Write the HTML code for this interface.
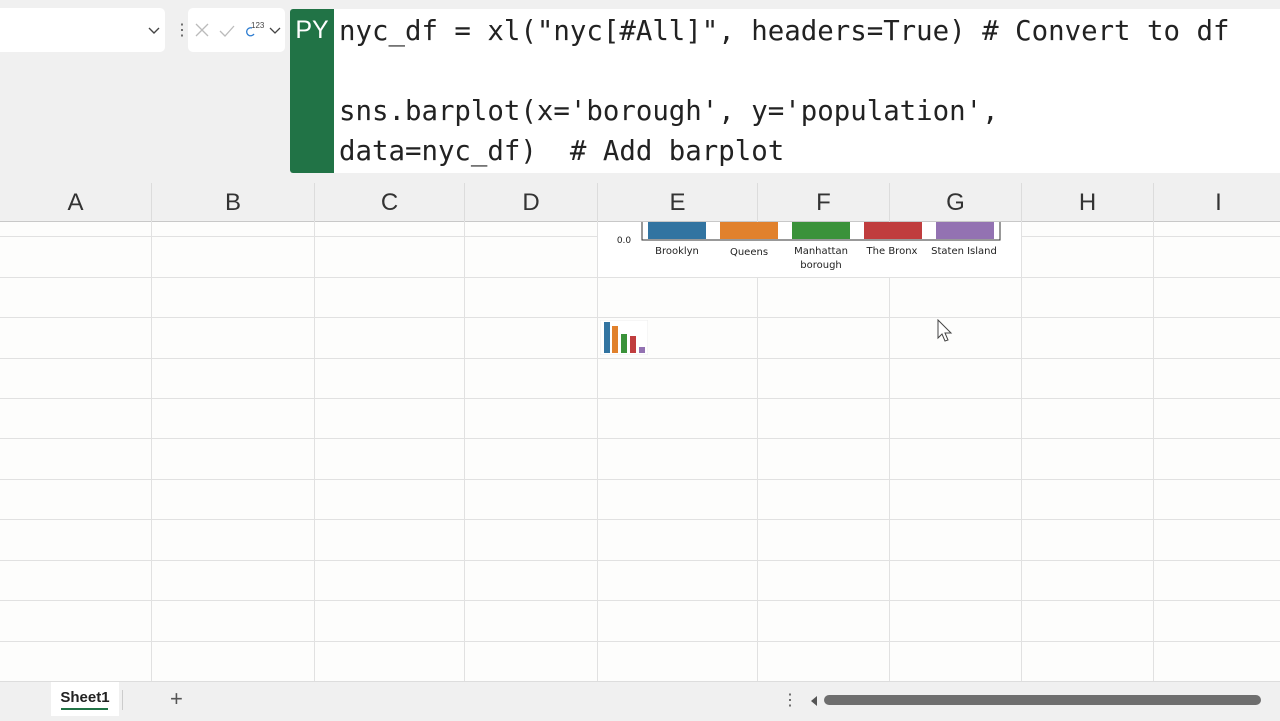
<!DOCTYPE html><html><head><style>
body{margin:0;width:1280px;height:720px;overflow:hidden;background:#f0f0f0;font-family:"Liberation Sans",sans-serif;position:relative}
.a{position:absolute}
.code{font-family:"DejaVu Sans Mono","Liberation Mono",monospace;font-size:27.4px;color:#222;line-height:40px;white-space:pre}
.hdr{top:183px;height:38px;background:#f0f0f0;border-bottom:1px solid #c8c8c8}
.col{position:absolute;top:183px;height:38px;line-height:40px;text-align:center;font-size:24px;color:#333;border-right:1px solid #dcdcdc;box-sizing:border-box}
.vl{position:absolute;top:221px;width:1px;height:460px;background:#e1e1e1}
.hl{position:absolute;left:0;width:1280px;height:1px;background:#e1e1e1}
</style></head><body>
<div class="a" style="left:0;top:8px;width:165px;height:44px;background:#fff;border-radius:0 5px 5px 0"></div>
<svg class="a" style="left:147px;top:26px" width="14" height="10"><path d="M2 2l5 5 5-5" stroke="#444" stroke-width="1.4" fill="none"/></svg>
<div class="a" style="left:174px;top:20px;font-size:16px;color:#555">&#8942;</div>
<div class="a" style="left:188px;top:8px;width:97px;height:44px;background:#fff;border-radius:5px"></div>
<svg class="a" style="left:194px;top:22px" width="90" height="20"><path d="M2 2l12 12M14 2L2 14" stroke="#bbb" stroke-width="1.3"/><path d="M26 9l5 5 9-10" stroke="#bbb" stroke-width="1.3" fill="none"/><path d="M58 6a4 4 0 1 0 2 6" stroke="#2b7bd0" stroke-width="1.3" fill="none"/><text x="57" y="6" font-size="8" fill="#444" font-family="Liberation Sans">123</text><path d="M76 6l5 5 5-5" stroke="#444" stroke-width="1.3" fill="none"/></svg>
<div class="a" style="left:290px;top:9px;width:44px;height:164px;background:#217346;border-radius:3px 0 0 3px;color:#fff;font-size:25px;text-align:center;line-height:42px">PY</div>
<div class="a" style="left:334px;top:9px;width:946px;height:164px;background:#fff"></div>
<div class="a code" style="left:339px;top:12px">nyc_df = xl("nyc[#All]", headers=True) # Convert to df

sns.barplot(x='borough', y='population',
data=nyc_df)  # Add barplot</div>
<div class="a" style="left:0;top:221px;width:1280px;height:460px;background:#fdfdfc"></div>
<div class="a hdr" style="left:0;width:1280px"></div>
<div class="col" style="left:0;width:152px">A</div>
<div class="col" style="left:152px;width:163px">B</div>
<div class="col" style="left:315px;width:150px">C</div>
<div class="col" style="left:465px;width:133px">D</div>
<div class="col" style="left:598px;width:160px">E</div>
<div class="col" style="left:758px;width:132px">F</div>
<div class="col" style="left:890px;width:132px">G</div>
<div class="col" style="left:1022px;width:132px">H</div>
<div class="col" style="left:1154px;width:130px">I</div>
<div class="vl" style="left:151px"></div><div class="vl" style="left:314px"></div><div class="vl" style="left:464px"></div><div class="vl" style="left:597px"></div><div class="vl" style="left:757px"></div><div class="vl" style="left:889px"></div><div class="vl" style="left:1021px"></div><div class="vl" style="left:1153px"></div>
<div class="hl" style="top:236px"></div><div class="hl" style="top:277px"></div><div class="hl" style="top:317px"></div><div class="hl" style="top:358px"></div><div class="hl" style="top:398px"></div><div class="hl" style="top:438px"></div><div class="hl" style="top:479px"></div><div class="hl" style="top:519px"></div><div class="hl" style="top:560px"></div><div class="hl" style="top:600px"></div><div class="hl" style="top:641px"></div>
<svg class="a" style="left:598px;top:222px" width="423" height="55"><rect width="423" height="55" fill="#fff"/><g><rect x="50" y="0" width="58" height="17" fill="#3274a1"/><rect x="122" y="0" width="58" height="17" fill="#e1812c"/><rect x="194" y="0" width="58" height="17" fill="#3a923a"/><rect x="266" y="0" width="58" height="17" fill="#c03d3e"/><rect x="338" y="0" width="58" height="17" fill="#9372b2"/></g><path d="M44 0V18H402V0" stroke="#333" fill="none"/><g font-family="DejaVu Sans" font-size="10" fill="#222" text-anchor="middle"><text x="26" y="21" font-size="9">0.0</text><text x="79" y="32">Brooklyn</text><text x="151" y="33">Queens</text><text x="223" y="32">Manhattan</text><text x="223" y="46">borough</text><text x="294" y="32">The Bronx</text><text x="366" y="32">Staten Island</text></g></svg>
<svg class="a" style="left:600px;top:320px" width="48" height="35"><rect width="48" height="35" fill="#fff" stroke="#eee"/><rect x="4" y="2" width="6" height="31" fill="#3274a1"/><rect x="12" y="6" width="6" height="27" fill="#e1812c"/><rect x="21" y="14" width="6" height="19" fill="#3a923a"/><rect x="30" y="16" width="6" height="17" fill="#c03d3e"/><rect x="39" y="27" width="6" height="6" fill="#9372b2"/></svg>
<svg class="a" style="left:937px;top:319px" width="16" height="24"><path d="M1 1v18l4-4 3 7 3-1-3-7h6z" fill="#fff" stroke="#444"/></svg>
<div class="a" style="left:0;top:681px;width:1280px;height:39px;background:#f0f0f0;border-top:1px solid #ddd"></div>
<div class="a" style="left:51px;top:682px;width:68px;height:34px;background:#fff;font-size:15px;font-weight:bold;text-align:center;line-height:32px;color:#222">Sheet1</div>
<div class="a" style="left:61px;top:708px;width:47px;height:2px;background:#217346"></div>
<div class="a" style="left:122px;top:690px;width:1px;height:20px;background:#ccc"></div>
<div class="a" style="left:170px;top:686px;font-size:22px;color:#555">+</div>
<div class="a" style="left:782px;top:690px;font-size:16px;color:#555">&#8942;</div>
<div class="a" style="left:811px;top:696px;width:0;height:0;border:5px solid transparent;border-right:6px solid #555;border-left:0"></div>
<div class="a" style="left:824px;top:695px;width:437px;height:10px;background:#6e6e6e;border-radius:5px"></div>
</body></html>
